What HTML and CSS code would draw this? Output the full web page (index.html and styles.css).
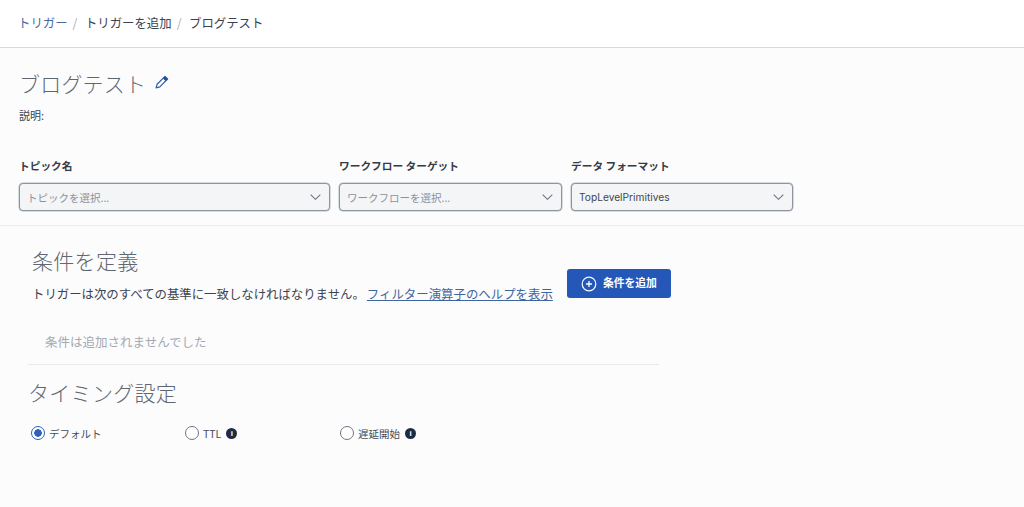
FILE: index.html
```html
<!DOCTYPE html>
<html lang="ja">
<head>
<meta charset="utf-8">
<title>ブログテスト</title>
<link rel="stylesheet" href="styles.css">
</head>
<body>
<nav class="crumbs">
  <a class="crumb-link">トリガー</a><span class="sep">/</span>
  <span class="crumb">トリガーを追加</span><span class="sep">/</span>
  <span class="crumb">ブログテスト</span>
</nav>
<main class="page">
  <header class="head">
    <div class="title-row">
      <h1 class="title">ブログテスト</h1>
      <svg class="pencil" width="14" height="14" viewBox="0 0 14 14"><path d="M10 1.4l2.6 2.6-7.8 7.8-3.7 1 1-3.6z" fill="none" stroke="#2f5da8" stroke-width="1.2" stroke-linejoin="round"/><path d="M10 1.4l2.6 2.6-2 2-2.6-2.6z" fill="#1f4e9c"/></svg>
    </div>
    <p class="desc">説明:</p>
  </header>
  <section class="fields">
    <div class="field f1">
      <label class="label">トピック名</label>
      <div class="select placeholder"><span>トピックを選択...</span><svg class="chev" width="11" height="6" viewBox="0 0 11 6"><path d="M.7.7l4.8 4.6L10.3.7" fill="none" stroke="#6b7480" stroke-width="1.1"/></svg></div>
    </div>
    <div class="field f2">
      <label class="label">ワークフロー ターゲット</label>
      <div class="select placeholder"><span>ワークフローを選択...</span><svg class="chev" width="11" height="6" viewBox="0 0 11 6"><path d="M.7.7l4.8 4.6L10.3.7" fill="none" stroke="#6b7480" stroke-width="1.1"/></svg></div>
    </div>
    <div class="field f3">
      <label class="label">データ フォーマット</label>
      <div class="select"><span>TopLevelPrimitives</span><svg class="chev" width="11" height="6" viewBox="0 0 11 6"><path d="M.7.7l4.8 4.6L10.3.7" fill="none" stroke="#6b7480" stroke-width="1.1"/></svg></div>
    </div>
  </section>
  <section class="conditions">
    <div class="cond-row">
      <div>
        <h2 class="h-cond">条件を定義</h2>
        <p class="rule">トリガーは次のすべての基準に一致しなければなりません。<a class="help">フィルター演算子のヘルプを表示</a></p>
      </div>
      <button class="add" type="button">
        <svg width="16" height="16" viewBox="0 0 16 16"><circle cx="8" cy="8" r="6.8" fill="none" stroke="#fff" stroke-width="1.2"/><path d="M8 5v6M5 8h6" stroke="#fff" stroke-width="1.3"/></svg>
        <span class="add-text">条件を追加</span>
      </button>
    </div>
    <p class="empty">条件は追加されませんでした</p>
    <div class="rule-line"></div>
    <h2 class="h-timing">タイミング設定</h2>
    <div class="radios">
      <div class="radio r1"><span class="dot on"></span><span>デフォルト</span></div>
      <div class="radio r2"><span class="dot"></span><span>TTL</span><span class="info">i</span></div>
      <div class="radio r3"><span class="dot"></span><span>遅延開始</span><span class="info">i</span></div>
    </div>
  </section>
</main>
</body>
</html>
```

FILE: styles.css
```css
* { box-sizing: border-box; }
html, body { height: 100%; }
body {
  margin: 0;
  background: #fcfcfc;
  color: #333b47;
  font-family: "Noto Sans CJK JP", "Noto Sans", sans-serif;
  overflow: hidden;
}
.crumbs {
  height: 48px;
  background: #fff;
  border-bottom: 1px solid #d9d9dc;
  padding: 13px 0 0 18px;
  font-size: 12.4px;
  line-height: 20px;
  display: flex;
  color: #3b4350;
}
.crumb-link { color: #4a6a9e; }
.sep { color: #a9afb8; margin: 0 7.5px 0 5px; }
.head { padding: 20px 19px 0; }
.title-row { display: flex; align-items: center; gap: 9px; height: 30px; }
.title {
  margin: 0;
  font-size: 21px;
  font-weight: 300;
  line-height: 30px;
  color: #5e6772;
  letter-spacing: .2px;
}
.pencil { margin-top: -3px; }
.desc { margin: 9px 0 0; font-size: 11px; line-height: 16px; color: #3b4350; }
.fields {
  display: flex;
  margin-top: 35px;
  padding: 0 0 15px 19px;
  border-bottom: 1px solid #ececee;
  height: 68px;
}
.field { display: flex; flex-direction: column; }
.f1 { width: 311px; margin-right: 9px; }
.f2 { width: 223px; margin-right: 9px; }
.f3 { width: 222px; }
.label { font-size: 10.7px; font-weight: 700; line-height: 16px; color: #333b47; margin-bottom: 9px; }
.select {
  height: 28px;
  flex: none;
  background: #f4f5f7;
  border: 1px solid #8e959e;
  border-radius: 4px;
  padding: 0 8px 0 7px;
  display: flex;
  align-items: center;
  justify-content: space-between;
  font-size: 10.2px;
  color: #3f4752;
  font-family: "Inter", "Noto Sans CJK JP", sans-serif;
  box-shadow: 0 0 0 .5px #b6bbc2;
}
.placeholder { color: #8b929c; font-size: 10.5px; font-family: "Noto Sans CJK JP", sans-serif; }
.conditions { padding: 18px 0 0 28px; }
.cond-row { display: flex; align-items: flex-start; padding-left: 4px; }
.h-cond { margin: 0; font-size: 21px; font-weight: 300; line-height: 32px; color: #5e6772; letter-spacing: .3px; }
.rule { margin: 8px 0 0; font-size: 12.4px; line-height: 20px; color: #3b4350; white-space: nowrap; }
.help { color: #3f659f; text-decoration: underline; margin-left: 2px; letter-spacing: .03px; }
.add {
  margin: 25px 0 0 14px;
  width: 104px;
  height: 29px;
  background: #2457b8;
  color: #fff;
  border: 0;
  border-radius: 3px;
  display: flex;
  align-items: center;
  gap: 6px;
  padding: 0 0 0 14px;
  font-family: inherit;
  font-size: 10.8px;
  font-weight: 700;
}
.add-text { margin-top: -3px; }
.empty { margin: 28px 0 0 17px; font-size: 12.5px; line-height: 20px; color: #a4a9b4; }
.rule-line { width: 631px; height: 1px; background: #e9e9eb; margin-top: 12px; }
.h-timing { margin: 12px 0 0; font-size: 21px; font-weight: 300; line-height: 30px; color: #5e6772; letter-spacing: .3px; }
.radios { display: flex; margin-top: 18px; padding-left: 3px; font-size: 10.5px; color: #444c58; }
.radio { display: flex; align-items: center; gap: 4px; height: 16px; }
.r1 { width: 154px; }
.r2 { width: 155px; }
.dot { width: 14px; height: 14px; border-radius: 50%; border: 1.5px solid #6e7682; background: #fff; }
.dot.on { border-color: #2f62b8; background: radial-gradient(circle, #2f62b8 0 3.5px, #fff 4px); }
.info {
  width: 11px; height: 11px; border-radius: 50%;
  background: #1f2a44; color: #fff;
  font: 700 8px/11px "Liberation Sans", sans-serif;
  text-align: center;
  margin-left: 1px;
}
```
